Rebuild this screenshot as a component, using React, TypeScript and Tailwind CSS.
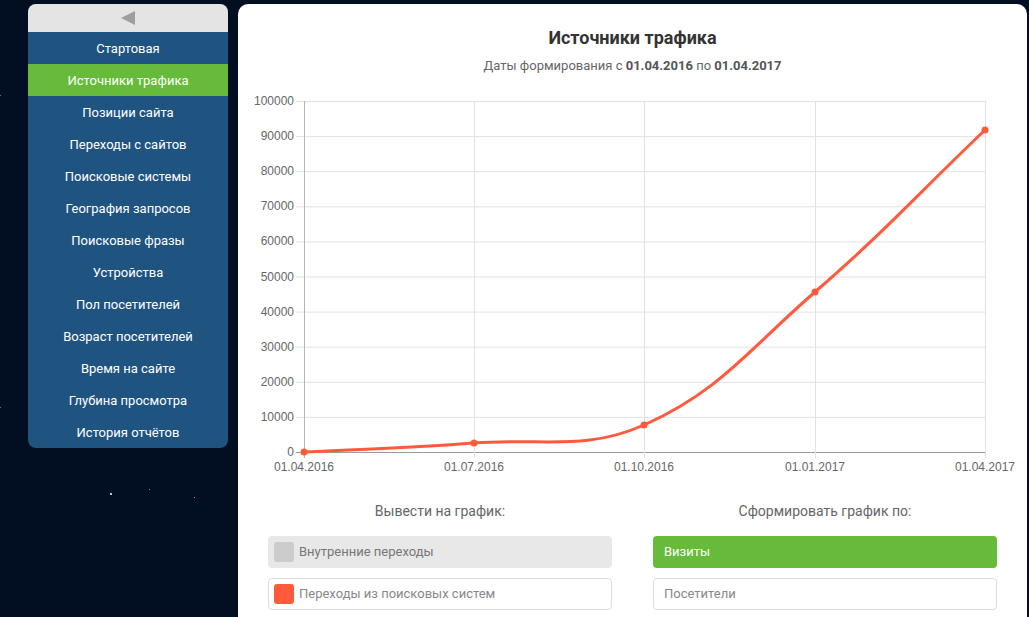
import React from 'react';

const menu = [
  'Стартовая',
  'Источники трафика',
  'Позиции сайта',
  'Переходы с сайтов',
  'Поисковые системы',
  'География запросов',
  'Поисковые фразы',
  'Устройства',
  'Пол посетителей',
  'Возраст посетителей',
  'Время на сайте',
  'Глубина просмотра',
  'История отчётов',
];

const yTicks = [100000, 90000, 80000, 70000, 60000, 50000, 40000, 30000, 20000, 10000, 0];
const xTicks = [
  { x: 66, label: '01.04.2016' },
  { x: 236, label: '01.07.2016' },
  { x: 406, label: '01.10.2016' },
  { x: 577, label: '01.01.2017' },
  { x: 747, label: '01.04.2017' },
];
const points = [
  [66, 364],
  [236, 355],
  [406, 337],
  [577, 204],
  [747, 42],
];

const Y0 = 13;
const Y1 = 364;
const yFor = (v: number) => Y1 - ((Y1 - Y0) * v) / 100000;

function Chart() {
  return (
    <svg width="789" height="392" className="block" style={{ fontFamily: '"Liberation Sans", Arial, sans-serif' }}>
      {yTicks.map((v) => (
        <g key={v}>
          <line x1={58} x2={747} y1={yFor(v) + 0.5} y2={yFor(v) + 0.5} stroke={v === 0 ? '#9a9a9a' : '#e2e2e2'} strokeWidth="1" />
          <text x={56} y={yFor(v) + 4} fontSize="12" fill="#666" textAnchor="end">
            {v}
          </text>
        </g>
      ))}
      {xTicks.map((t, i) => (
        <g key={t.label}>
          <line x1={t.x + 0.5} x2={t.x + 0.5} y1={Y0} y2={Y1 + 6} stroke={i === 0 ? '#b5b5b5' : '#e2e2e2'} strokeWidth="1" />
          <text x={t.x} y={383} fontSize="12" fill="#666" textAnchor="middle">
            {t.label}
          </text>
        </g>
      ))}
      <path
        d="M66 364 C134 360.4 168 360.4 236 355 C304.1 349.6 345.8 363.6 406 337 C482.2 303.2 511.5 260.6 577 204 C647.9 142.6 679 106.8 747 42"
        fill="none"
        stroke="#ff5a3c"
        strokeWidth="3"
      />
      {points.map(([x, y]) => (
        <circle key={x} cx={x} cy={y} r="3.5" fill="#ff5a3c" />
      ))}
    </svg>
  );
}

export default function App() {
  return (
    <div
      className="relative flex h-[617px] w-[1029px] overflow-hidden bg-[#020f22] pt-[4px]"
      style={{ fontFamily: 'Roboto, "Noto Sans", sans-serif' }}
    >
      {/* stars */}
      <span className="absolute left-[110px] top-[493px] h-[2px] w-[2px] bg-[#b8c8d0]" />
      <span className="absolute left-[149px] top-[489px] h-px w-px bg-[#7f8f9a]" />
      <span className="absolute left-[194px] top-[497px] h-px w-px bg-[#8a9aa5]" />
      <span className="absolute left-0 top-[95px] h-px w-px bg-[#5f6f7a]" />
      <span className="absolute left-0 top-[407px] h-px w-px bg-[#5f6f7a]" />

      <aside className="ml-[28px] flex h-[444px] w-[200px] shrink-0 flex-col overflow-hidden rounded-[8px] bg-[#1f5380]">
        <div className="flex h-[28px] items-center justify-center bg-[#e4e4e4]">
          <svg width="16" height="16" viewBox="0 0 16 16">
            <polygon points="1,8 15,1 15,15" fill="#9e9e9e" />
          </svg>
        </div>
        {menu.map((m, i) => (
          <div
            key={m}
            className={`flex h-[32px] items-center justify-center pt-[2px] text-[13px] text-white ${i === 1 ? 'bg-[#66bb3a]' : ''}`}
          >
            {m}
          </div>
        ))}
      </aside>

      <main className="ml-[10px] flex w-[789px] shrink-0 flex-col rounded-t-[10px] bg-white">
        <h1 className="mt-[22px] text-center text-[18px] font-bold leading-[24px] text-[#333]">Источники трафика</h1>
        <p className="mt-[7px] text-center text-[13px] leading-[18px] text-[#666]">
          Даты формирования с <b className="text-[#555]">01.04.2016</b> по <b className="text-[#555]">01.04.2017</b>
        </p>
        <div className="mt-[13px]">
          <Chart />
        </div>
        <div className="mt-[21px] grid grid-cols-2 gap-[41px] pl-[30px] pr-[30px]">
          <div className="flex flex-col">
            <div className="text-center text-[14px] leading-[20px] text-[#666]">Вывести на график:</div>
            <div className="mt-[15px] flex h-[32px] items-center rounded-[4px] bg-[#e8e8e8] px-[6px] text-[13px] text-[#777]">
              <span className="mr-[5px] h-[20px] w-[20px] rounded-[3px] bg-[#cccccc]" />
              Внутренние переходы
            </div>
            <div className="mt-[10px] flex h-[32px] items-center rounded-[4px] border border-[#dddddd] px-[5px] text-[13px] text-[#888]">
              <span className="mr-[5px] h-[20px] w-[20px] rounded-[3px] bg-[#ff5a3c]" />
              Переходы из поисковых систем
            </div>
          </div>
          <div className="flex flex-col">
            <div className="text-center text-[14px] leading-[20px] text-[#666]">Сформировать график по:</div>
            <div className="mt-[15px] flex h-[32px] items-center rounded-[4px] bg-[#66bb3a] px-[11px] text-[13px] text-white">
              Визиты
            </div>
            <div className="mt-[10px] flex h-[32px] items-center rounded-[4px] border border-[#dddddd] px-[10px] text-[13px] text-[#888]">
              Посетители
            </div>
          </div>
        </div>
      </main>
    </div>
  );
}
